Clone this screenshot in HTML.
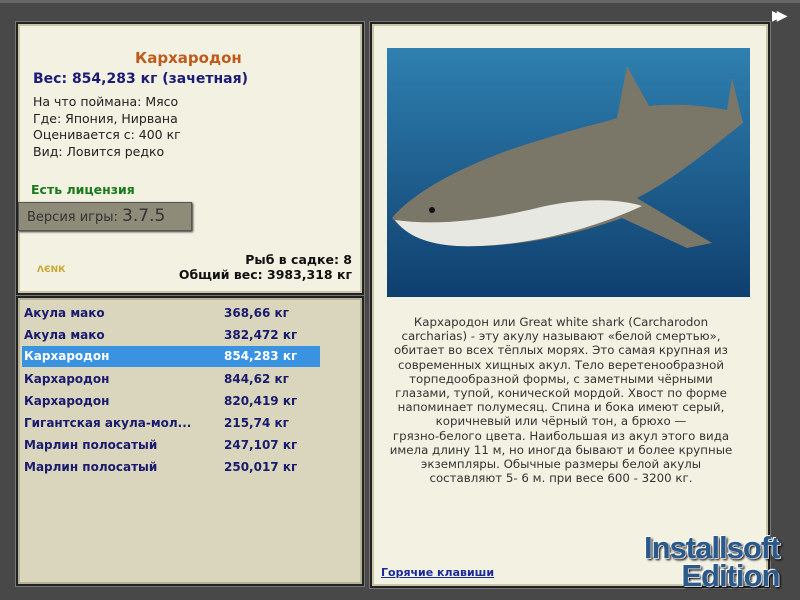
<!DOCTYPE html>
<html><head><meta charset="utf-8"><style>
body{margin:0;width:800px;height:600px;background:#484848;position:relative;overflow:hidden;font-family:"DejaVu Sans","Liberation Sans",sans-serif;}
.p{position:absolute;box-sizing:border-box;border:2px solid #222;outline:1px solid #777;}
.t{position:absolute;white-space:nowrap;}
.row{position:absolute;left:22px;width:298px;height:21px;font-weight:bold;font-size:12px;color:#1a1a6e;line-height:21px;}
.row span{position:absolute;left:2px}.row b{position:absolute;left:202px}
</style></head><body>
<div style="position:absolute;left:0;top:0;width:800px;height:3px;background:#666"></div>
<div class="p" style="left:16px;top:22px;width:348px;height:273px;background:#f2f1e2;box-shadow:inset 0 0 0 2px #c9c7a8"></div>
<div class="p" style="left:16px;top:296px;width:348px;height:290px;background:#d9d6bd;box-shadow:inset 0 0 0 2px #b5b395"></div>
<div class="p" style="left:370px;top:22px;width:400px;height:566px;background:#f2f1e2;box-shadow:inset 0 0 0 2px #c9c7a8"></div>
<div class="t" style="left:135px;top:49px;font-size:15px;font-weight:bold;color:#c05a1c">Кархародон</div>
<div class="t" style="left:33px;top:71px;font-size:14px;font-weight:bold;color:#1c1c78">Вес: 854,283 кг (зачетная)</div>
<div class="t" style="left:33px;top:94px;font-size:12.5px;color:#222;line-height:16.5px">На что поймана: Мясо<br>Где: Япония, Нирвана<br>Оценивается с: 400 кг<br>Вид: Ловится редко</div>
<div class="t" style="left:31px;top:182px;font-size:12.5px;font-weight:bold;color:#1a7a1a">Есть лицензия</div>
<div style="position:absolute;left:18px;top:202px;width:172px;height:27px;background:#8e8b78;border:1px solid #555;box-shadow:1px 1px 2px #333"></div>
<div class="t" style="left:27px;top:206px;font-size:13px;color:#333">Версия игры: <span style="font-size:17px">3.7.5</span></div>
<div class="t" style="left:37px;top:265px;font-size:9px;font-weight:bold;color:#c8a830">ΛЄNК</div>
<div class="t" style="right:448px;top:252px;font-size:12.5px;font-weight:bold;color:#111;text-align:right;line-height:15px">Рыб в садке: 8<br>Общий вес: 3983,318 кг</div>
<div class="row" style="top:303px"><span>Акула мако</span><b>368,66 кг</b></div>
<div class="row" style="top:325px"><span>Акула мако</span><b>382,472 кг</b></div>
<div class="row" style="top:346px;background:#3a93e0;color:#fff"><span>Кархародон</span><b>854,283 кг</b></div>
<div class="row" style="top:369px"><span>Кархародон</span><b>844,62 кг</b></div>
<div class="row" style="top:391px"><span>Кархародон</span><b>820,419 кг</b></div>
<div class="row" style="top:413px"><span>Гигантская акула-мол...</span><b>215,74 кг</b></div>
<div class="row" style="top:435px"><span>Марлин полосатый</span><b>247,107 кг</b></div>
<div class="row" style="top:457px"><span>Марлин полосатый</span><b>250,017 кг</b></div>
<svg style="position:absolute;left:387px;top:48px" width="363" height="249" viewBox="0 0 363 249">
<defs><linearGradient id="g" x1="0" y1="0" x2="0" y2="1"><stop offset="0" stop-color="#2f80b0"/><stop offset="1" stop-color="#0f3f6e"/></linearGradient></defs>
<rect width="363" height="249" fill="url(#g)"/>
<path d="M5 170 C30 140 90 110 160 90 C190 80 215 75 230 70 L240 18 L262 58 C290 55 320 58 340 62 L345 30 L356 75 C330 95 290 130 250 150 L325 195 L300 200 L235 170 C180 190 120 200 70 198 C40 196 20 188 5 170Z" fill="#7a7668"/>
<path d="M8 172 C50 178 100 172 150 160 C190 150 230 150 255 158 C190 188 120 200 70 198 C40 196 20 188 8 172Z" fill="#e8e8e2"/>
<circle cx="45" cy="162" r="3" fill="#111"/>
</svg>
<div class="t" style="left:381px;top:315px;font-size:11.8px;color:#333;line-height:14.2px;text-align:center;width:360px">Кархародон или Great white shark (Carcharodon<br>carcharias) - эту акулу называют «белой смертью»,<br>обитает во всех тёплых морях. Это самая крупная из<br>современных хищных акул. Тело веретенообразной<br>торпедообразной формы, с заметными чёрными<br>глазами, тупой, конической мордой. Хвост по форме<br>напоминает полумесяц. Спина и бока имеют серый,<br>коричневый или чёрный тон, а брюхо —<br>грязно-белого цвета. Наибольшая из акул этого вида<br>имела длину 11 м, но иногда бывают и более крупные<br>экземпляры. Обычные размеры белой акулы<br>составляют 5- 6 м. при весе 600 - 3200 кг.</div>
<div class="t" style="left:381px;top:566px;font-size:11px;font-weight:bold;color:#1a2a9a;text-decoration:underline">Горячие клавиши</div>
<div class="t" style="left:772px;top:8px;font-size:14px;color:#fff;letter-spacing:-6px">▶▶</div>
<div class="t" style="left:644px;top:534px;font-family:'Liberation Sans',sans-serif;font-size:31px;font-weight:bold;color:#2a5a8a;line-height:28px;text-align:right;letter-spacing:-1px;text-shadow:1px 1px 0 #ccd,-1px -1px 0 #fff,2px 2px 2px #000">Installsoft<br>Edition</div>
</body></html>
